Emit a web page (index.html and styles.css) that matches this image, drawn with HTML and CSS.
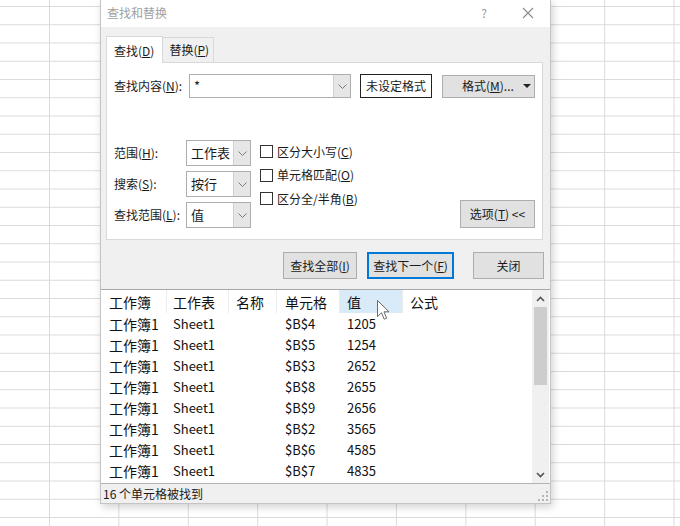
FILE: index.html
```html
<!DOCTYPE html>
<html lang="zh-CN">
<head>
<meta charset="utf-8">
<title>查找和替换</title>
<link rel="stylesheet" href="styles.css">
</head>
<body>
<div class="sheet">
  <div class="dialog">
    <div class="titlebar">
      <span class="title">查找和替换</span>
      <span class="help">?</span>
      <span class="close"><svg width="12" height="12" viewBox="0 0 12 12"><path d="M1 1 L11 11 M11 1 L1 11" stroke="#8a8a8a" stroke-width="1.1" fill="none"/></svg></span>
    </div>
    <div class="content">
      <div class="tabs">
        <div class="tab active">查找(<u>D</u>)</div>
        <div class="tab">替换(<u>P</u>)</div>
      </div>
      <div class="panel">
        <div class="find-row">
          <span class="lbl-find">查找内容(<u>N</u>):</span>
          <div class="combo combo-wide"><span class="val">*</span><span class="drop"><svg width="9" height="5" viewBox="0 0 9 5"><path d="M0.5 0.5 L4.5 4.5 L8.5 0.5" stroke="#7a7a7a" fill="none"/></svg></span></div>
          <div class="preview">未设定格式</div>
          <div class="btn btn-fmt"><span>格式(<u>M</u>)...</span><span class="caret"><svg width="8" height="4" viewBox="0 0 8 4"><path d="M0 0 H8 L4 4 Z" fill="#222"/></svg></span></div>
        </div>
        <div class="opts">
          <div class="optgrid">
            <span class="olbl">范围(<u>H</u>):</span>
            <div class="combo"><span class="val">工作表</span><span class="drop"><svg width="9" height="5" viewBox="0 0 9 5"><path d="M0.5 0.5 L4.5 4.5 L8.5 0.5" stroke="#7a7a7a" fill="none"/></svg></span></div>
            <span class="olbl">搜索(<u>S</u>):</span>
            <div class="combo"><span class="val">按行</span><span class="drop"><svg width="9" height="5" viewBox="0 0 9 5"><path d="M0.5 0.5 L4.5 4.5 L8.5 0.5" stroke="#7a7a7a" fill="none"/></svg></span></div>
            <span class="olbl">查找范围(<u>L</u>):</span>
            <div class="combo"><span class="val">值</span><span class="drop"><svg width="9" height="5" viewBox="0 0 9 5"><path d="M0.5 0.5 L4.5 4.5 L8.5 0.5" stroke="#7a7a7a" fill="none"/></svg></span></div>
          </div>
          <div class="checks">
            <div class="chk"><span class="box"></span>区分大小写(<u>C</u>)</div>
            <div class="chk"><span class="box"></span>单元格匹配(<u>O</u>)</div>
            <div class="chk"><span class="box"></span>区分全/半角(<u>B</u>)</div>
          </div>
          <div class="btn btn-opt">选项(<u>T</u>) &lt;&lt;</div>
        </div>
      </div>
      <div class="actions">
        <div class="btn btn-all">查找全部(<u>I</u>)</div>
        <div class="btn btn-next">查找下一个(<u>F</u>)</div>
        <div class="btn btn-close">关闭</div>
      </div>
    </div>
    <div class="results">
      <div class="table">
        <div class="row thead">
          <span class="c1">工作簿</span><span class="c2">工作表</span><span class="c3">名称</span><span class="c4">单元格</span><span class="c5 hot">值</span><span class="c6">公式</span>
        </div>
        <div class="row"><span class="c1">工作簿1</span><span class="c2">Sheet1</span><span class="c3"></span><span class="c4">$B$4</span><span class="c5">1205</span><span class="c6"></span></div>
        <div class="row"><span class="c1">工作簿1</span><span class="c2">Sheet1</span><span class="c3"></span><span class="c4">$B$5</span><span class="c5">1254</span><span class="c6"></span></div>
        <div class="row"><span class="c1">工作簿1</span><span class="c2">Sheet1</span><span class="c3"></span><span class="c4">$B$3</span><span class="c5">2652</span><span class="c6"></span></div>
        <div class="row"><span class="c1">工作簿1</span><span class="c2">Sheet1</span><span class="c3"></span><span class="c4">$B$8</span><span class="c5">2655</span><span class="c6"></span></div>
        <div class="row"><span class="c1">工作簿1</span><span class="c2">Sheet1</span><span class="c3"></span><span class="c4">$B$9</span><span class="c5">2656</span><span class="c6"></span></div>
        <div class="row"><span class="c1">工作簿1</span><span class="c2">Sheet1</span><span class="c3"></span><span class="c4">$B$2</span><span class="c5">3565</span><span class="c6"></span></div>
        <div class="row"><span class="c1">工作簿1</span><span class="c2">Sheet1</span><span class="c3"></span><span class="c4">$B$6</span><span class="c5">4585</span><span class="c6"></span></div>
        <div class="row"><span class="c1">工作簿1</span><span class="c2">Sheet1</span><span class="c3"></span><span class="c4">$B$7</span><span class="c5">4835</span><span class="c6"></span></div>
      </div>
      <div class="vscroll">
        <span class="arrow"><svg width="9" height="6" viewBox="0 0 9 6"><path d="M1 5 L4.5 1.5 L8 5" stroke="#555" stroke-width="1.6" fill="none"/></svg></span>
        <span class="thumb"></span>
        <span class="track"></span>
        <span class="arrow"><svg width="9" height="6" viewBox="0 0 9 6"><path d="M1 1 L4.5 4.5 L8 1" stroke="#555" stroke-width="1.6" fill="none"/></svg></span>
      </div>
    </div>
    <div class="status">
      <span>16 个单元格被找到</span>
      <svg class="grip" width="10" height="10" viewBox="0 0 10 10"><g fill="#b5b5b5"><rect x="8" y="0" width="2" height="2"/><rect x="4" y="4" width="2" height="2"/><rect x="8" y="4" width="2" height="2"/><rect x="0" y="8" width="2" height="2"/><rect x="4" y="8" width="2" height="2"/><rect x="8" y="8" width="2" height="2"/></g></svg>
    </div>
    <svg class="cursor" width="13" height="21" viewBox="0 0 13 21"><path d="M0.5 0.5 L0.5 16.5 L4.5 12.8 L7.2 19.2 L9.6 18.2 L7 11.8 L12 11.8 Z" fill="#fff" stroke="#6a6a6a" stroke-width="1" stroke-linejoin="round"/></svg>
  </div>
</div>
</body>
</html>
```

FILE: styles.css
```css
* { box-sizing: border-box; }
html, body { margin: 0; padding: 0; }
body {
  width: 680px;
  height: 526px;
  overflow: hidden;
  font-family: "Noto Sans CJK SC", "Noto Sans", sans-serif;
  font-size: 12px;
  color: #1a1a1a;
}
u { text-decoration: underline; text-underline-offset: 1px; }

.sheet {
  position: relative;
  width: 680px;
  height: 526px;
  background-color: #fff;
  background-image:
    linear-gradient(to right, #dadada 1px, transparent 1px),
    linear-gradient(to bottom, #dadada 1px, transparent 1px);
  background-size: 69.4px 18.25px;
  background-position: 49px 6px;
}

.dialog {
  position: absolute;
  left: 100px;
  top: 0;
  width: 451px;
  height: 504px;
  background: #f0f0f0;
  border: 1px solid #c4c4c4;
  border-top: none;
  box-shadow: 2px 3px 8px rgba(0,0,0,0.18);
  display: flex;
  flex-direction: column;
}

.titlebar {
  height: 27px;
  background: #fff;
  display: flex;
  align-items: center;
  padding: 0 0 2px 6px;
  flex: none;
}
.title { color: #a0a0a0; font-size: 12px; line-height: 14px; flex: 1; }
.help { color: #9a9a9a; font-size: 12px; width: 14px; text-align: center; margin-right: 31px; line-height: 14px; }
.close { width: 12px; height: 12px; margin-right: 16px; display: flex; }

.content {
  padding: 9px 7px 0 5px;
  flex: none;
}

.tabs { display: flex; align-items: flex-end; height: 26px; }
.tab {
  height: 25px;
  padding: 0 4px 0 6px;
  display: flex;
  align-items: center;
  border: 1px solid #d9d9d9;
  border-bottom: none;
  background: #f0f0f0;
  line-height: 14px;
  white-space: nowrap;
}
.tab.active {
  height: 27px;
  background: #fff;
  margin-bottom: -1px;
  position: relative;
  z-index: 1;
  padding: 1px 8px 0 7px;
}
.tab + .tab { border-left: none; }

.panel {
  height: 178px;
  background: #fff;
  border: 1px solid #d9d9d9;
  padding: 11px 7px 0 7px;
}

.find-row { display: flex; align-items: center; height: 24px; }
.lbl-find { width: 75px; line-height: 14px; }

.combo {
  display: flex;
  border: 1px solid #adadad;
  background: #fff;
  height: 26px;
}
.combo .val { flex: 1; padding-left: 4px; display: flex; align-items: center; line-height: 14px; }
.combo .drop {
  width: 17px;
  background: #e6e6e6;
  border-left: 1px solid #d0d0d0;
  display: flex;
  align-items: center;
  justify-content: center;
}
.combo-wide { width: 162px; height: 24px; }
.combo-wide .val { align-items: flex-start; padding-top: 4px; padding-left: 4px; font-size: 13px; }

.preview {
  margin-left: 9px;
  width: 72px;
  height: 24px;
  border: 1px solid #222;
  background: #fff;
  display: flex;
  align-items: center;
  justify-content: center;
  line-height: 14px;
}

.btn {
  background: #e1e1e1;
  border: 1px solid #adadad;
  display: flex;
  align-items: center;
  justify-content: center;
  line-height: 14px;
}
.btn-fmt {
  margin-left: 10px;
  width: 93px;
  height: 23px;
  justify-content: flex-start;
  padding-left: 19px;
}
.btn-fmt .caret { margin-left: auto; margin-right: 3px; display: flex; }

.opts { display: flex; align-items: flex-start; margin-top: 42px; }
.optgrid {
  display: grid;
  grid-template-columns: 72px 65px;
  grid-auto-rows: 26px;
  row-gap: 5px;
  align-items: center;
}
.olbl { line-height: 14px; }
.optgrid .combo { height: 26px; }
.optgrid .combo .val { font-size: 13px; }

.checks { margin-left: 9px; display: flex; flex-direction: column; }
.chk { height: 23.5px; display: flex; align-items: center; line-height: 14px; }
.chk .box {
  width: 13px;
  height: 13px;
  border: 1px solid #333;
  background: #fff;
  margin-right: 4px;
}

.btn-opt {
  margin-left: auto;
  margin-top: 60px;
  width: 75px;
  height: 28px;
}

.actions {
  display: flex;
  justify-content: flex-end;
  margin-top: 12px;
  height: 27px;
}
.btn-all { width: 74px; }
.btn-next { width: 87px; margin-left: 10px; border: 1px solid #0078d7; box-shadow: inset 0 0 0 1px #0078d7; }
.btn-close { width: 71px; margin-left: 19px; margin-right: -1px; }

.results {
  margin-top: 10px;
  height: 195px;
  background: #fff;
  border-top: 1px solid #a8a8a8;
  border-bottom: 1px solid #b4b4b4;
  display: flex;
  flex: none;
  overflow: hidden;
}
.table { flex: 1; }
.row { display: flex; height: 21px; align-items: center; font-size: 13px; line-height: 16px; color: #111; }
.row span { padding-left: 7px; white-space: nowrap; }
.row span.c1 { font-size: 14px; padding-left: 8px; }
.row span.c2 { padding-left: 6px; }
.row span.c4 { padding-left: 8px; }
.thead { height: 23px; align-items: stretch; font-size: 14px; }
.thead span { display: flex; align-items: center; border-right: 1px solid #ececec; }
.thead span.c6 { border-right: none; }
.thead span.hot { background: #d9ebf9; }
.c1 { width: 66px; }
.c2 { width: 62px; }
.c3 { width: 48px; }
.c4 { width: 63px; }
.c5 { width: 63px; }
.c6 { flex: 1; }

.vscroll {
  width: 17px;
  margin-right: 1px;
  background: #f0f0f0;
  display: flex;
  flex-direction: column;
}
.vscroll .arrow { height: 17px; display: flex; align-items: center; justify-content: center; }
.vscroll .thumb { height: 78px; margin: 0 2px; background: #cdcdcd; }
.vscroll .track { flex: 1; }

.status {
  flex: 1;
  display: flex;
  align-items: center;
  padding-left: 2px;
  line-height: 14px;
  position: relative;
}
.grip { position: absolute; right: 2px; bottom: 2px; }

.cursor { position: absolute; left: 276px; top: 300px; }
```
